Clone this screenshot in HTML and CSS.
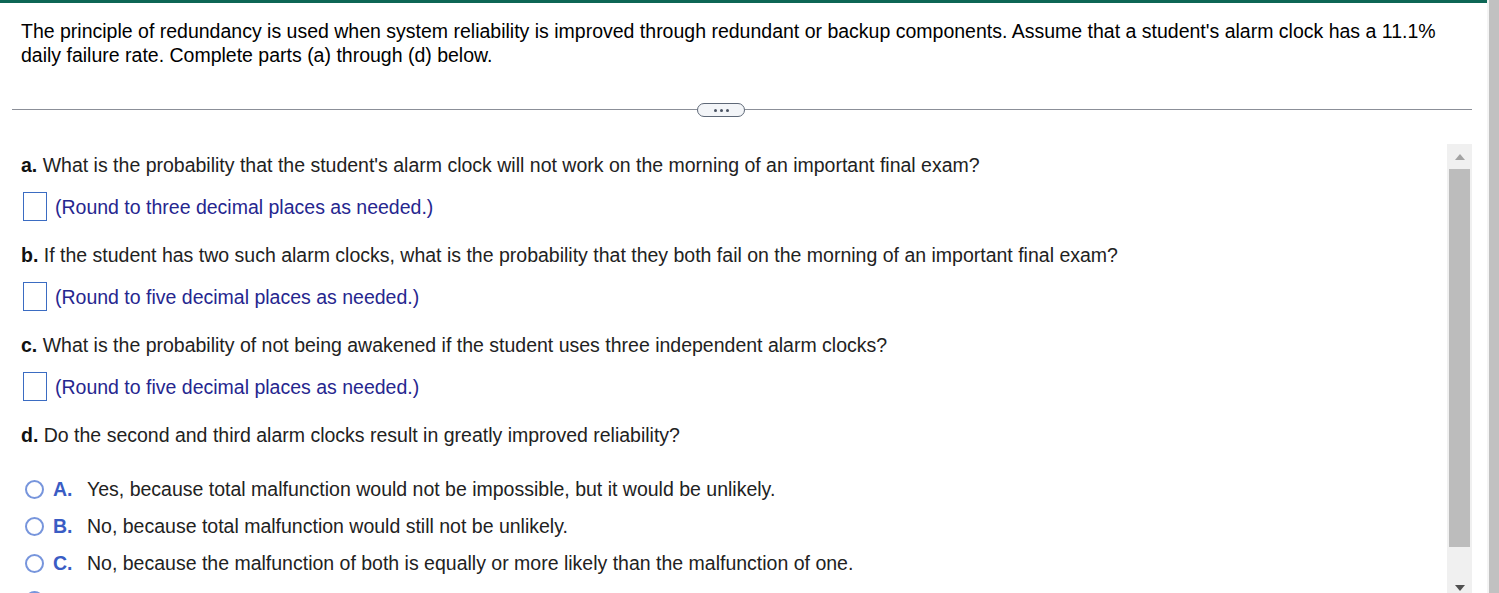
FILE: index.html
```html
<!DOCTYPE html>
<html>
<head>
<meta charset="utf-8">
<link rel="stylesheet" href="styles.css">
</head>
<body>
<div class="page">
  <div class="main">
    <div class="header">
      <p class="intro">The principle of redundancy is used when system reliability is improved through redundant or backup components. Assume that a student's alarm clock has a 11.1% daily failure rate. Complete parts (a) through (d) below.</p>
    </div>
    <div class="divider">
      <div class="line line-left"></div>
      <div class="pill"><span class="dot"></span><span class="dot"></span><span class="dot"></span></div>
      <div class="line line-right"></div>
    </div>
    <div class="scroll">
      <div class="content">
        <p class="q"><b>a.</b> What is the probability that the student's alarm clock will not work on the morning of an important final exam?</p>
        <div class="answer"><span class="box"></span><span class="hint">(Round to three decimal places as needed.)</span></div>
        <p class="q"><b>b.</b> If the student has two such alarm clocks, what is the probability that they both fail on the morning of an important final exam?</p>
        <div class="answer"><span class="box"></span><span class="hint">(Round to five decimal places as needed.)</span></div>
        <p class="q"><b>c.</b> What is the probability of not being awakened if the student uses three independent alarm clocks?</p>
        <div class="answer"><span class="box"></span><span class="hint">(Round to five decimal places as needed.)</span></div>
        <p class="q"><b>d.</b> Do the second and third alarm clocks result in greatly improved reliability?</p>
        <div class="options">
          <div class="opt"><span class="radio"></span><span class="letter">A.</span><span class="otext">Yes, because total malfunction would not be impossible, but it would be unlikely.</span></div>
          <div class="opt"><span class="radio"></span><span class="letter">B.</span><span class="otext">No, because total malfunction would still not be unlikely.</span></div>
          <div class="opt"><span class="radio"></span><span class="letter">C.</span><span class="otext">No, because the malfunction of both is equally or more likely than the malfunction of one.</span></div>
          <div class="opt"><span class="radio"></span></div>
        </div>
      </div>
      <div class="vscroll">
        <div class="arrow up"></div>
        <div class="thumb"></div>
        <div class="track-rest"></div>
        <div class="arrow down"></div>
      </div>
    </div>
  </div>
  <div class="outer-scroll"><div class="outer-thumb"></div></div>
</div>
</body>
</html>
```

FILE: styles.css
```css
html, body {
  margin: 0;
  padding: 0;
  height: 100%;
  overflow: hidden;
  background: #fff;
}
body {
  font-family: "Liberation Sans", Arial, sans-serif;
  font-size: 19.5px;
  color: #222;
}
.page {
  display: flex;
  height: 593px;
}
.main {
  flex: 1;
  display: flex;
  flex-direction: column;
  border-top: 3px solid #0d6655;
  min-width: 0;
}
.header {
  padding: 16px 40px 0 21px;
}
.intro {
  margin: 0;
  line-height: 24px;
  color: #000;
}
.divider {
  display: flex;
  align-items: flex-start;
  height: 14px;
  margin: 36px 15px 0 12px;
}
.line {
  height: 1px;
  margin-top: 6px;
  background: #8b8f98;
}
.line-left { width: 685px; }
.line-right { flex: 1; }
.pill {
  box-sizing: border-box;
  width: 48px;
  height: 14px;
  border: 1px solid #5e6877;
  border-radius: 7px;
  background: #f3f5f8;
  display: flex;
  align-items: center;
  justify-content: center;
  gap: 3px;
}
.dot {
  width: 3px;
  height: 3px;
  border-radius: 50%;
  background: #4a5362;
}
.scroll {
  flex: 1;
  display: flex;
  margin-top: 27px;
  min-height: 0;
  overflow: hidden;
}
.content {
  flex: 1;
  padding: 9px 0 0 21px;
}
.q {
  margin: 0;
  line-height: 24px;
}
.q b { color: #111; }
.answer {
  display: flex;
  align-items: center;
  gap: 8px;
  margin: 15px 0 22px 2px;
}
.box {
  box-sizing: border-box;
  width: 24px;
  height: 29px;
  border: 1px solid #3b6cc2;
  background: #fff;
}
.hint {
  color: #26268f;
  line-height: 24px;
}
.options {
  margin-top: 23px;
}
.opt {
  display: flex;
  align-items: center;
  padding: 7px 0 6px;
  height: 24px;
  line-height: 24px;
}
.radio {
  box-sizing: border-box;
  width: 19px;
  height: 19px;
  margin-left: 4px;
  border: 2px solid #7795dc;
  border-radius: 50%;
  background: #fff;
}
.letter {
  width: 34px;
  margin-left: 9px;
  font-weight: bold;
  color: #3a5cc4;
}
.otext {
  color: #222;
}
.vscroll {
  width: 25px;
  margin-right: 15px;
  background: #f0f0f0;
  display: flex;
  flex-direction: column;
  align-items: center;
}
.arrow {
  width: 0;
  height: 0;
  border-left: 5px solid transparent;
  border-right: 5px solid transparent;
}
.arrow.up {
  margin: 10px 0 9px;
  border-bottom: 6px solid #a3a3a3;
}
.arrow.down {
  margin: 0 0 2px;
  border-top: 6px solid #505050;
}
.thumb {
  width: 21px;
  height: 378px;
  background: #bcbcbc;
}
.track-rest {
  flex: 1;
}
.outer-scroll {
  width: 12px;
  display: flex;
  justify-content: flex-end;
  background: #f4f4f4;
}
.outer-thumb {
  width: 10px;
  background: #c1c1c1;
}
```
